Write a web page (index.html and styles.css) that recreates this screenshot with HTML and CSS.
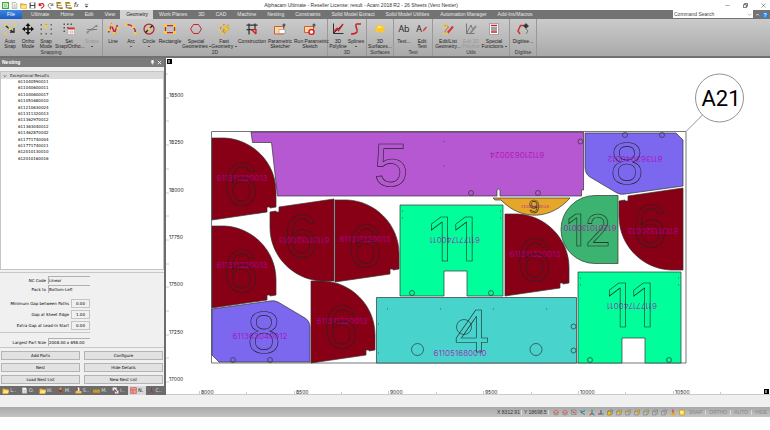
FILE: index.html
```
<!DOCTYPE html>
<html lang="en">
<head>
    <meta charset="UTF-8">
    <meta name="viewport" content="width=device-width, initial-scale=1.0">
    <title>Alphacam Ultimate</title>
    <link rel="stylesheet" href="styles.css">
</head>
<body>
    <!-- Shared icons -->
    <svg class="defs" width="0" height="0" aria-hidden="true">
        <symbol id="cube" viewBox="0 0 12 12"><path d="M1 4l3-3h7v7l-3 3H1zM1 4h7v7M8 4l3-3" fill="none" stroke="#777"/></symbol>
        <symbol id="cubeFront" viewBox="0 0 12 12"><path d="M1 4h7v7H1z" fill="#f4c20d"/><path d="M1 4l3-3h7v7l-3 3H1zM1 4h7v7M8 4l3-3" fill="none" stroke="#776633"/></symbol>
        <symbol id="cubeTop" viewBox="0 0 12 12"><path d="M1 4l3-3h7l-3 3z" fill="#f4c20d"/><path d="M1 4l3-3h7v7l-3 3H1zM1 4h7v7M8 4l3-3" fill="none" stroke="#777"/></symbol>
        <symbol id="cubeBack" viewBox="0 0 12 12"><path d="M4 1h7v7H4z" fill="#f4c20d"/><path d="M1 4l3-3h7v7l-3 3H1zM1 4h7v7M8 4l3-3" fill="none" stroke="#777"/></symbol>
        <symbol id="house" viewBox="0 0 12 12"><path d="M1 5l5-4 5 4-5 3z" fill="#e6a5a0" stroke="#cc2222"/><path d="M2 6v4l4 1 4-1V6" fill="none" stroke="#666"/></symbol>
        <symbol id="folder" viewBox="0 0 12 12"><path d="M1 3h4l1 1h5v7H1z" fill="#f5c842" stroke="#b58a1c"/><path d="M3 6h9l-2 5H1z" fill="#ffe28a"/></symbol>
        <symbol id="sheet" viewBox="0 0 12 12"><path d="M2 1h6l2 2v8H2z" fill="#fff" stroke="#888"/><path d="M4 5h4M4 7h4M4 9h4" stroke="#999"/></symbol>
        <symbol id="tree" viewBox="0 0 12 12"><path d="M2 3v7h5M2 6h4" fill="none" stroke="#555" stroke-width="1.5"/><path d="M0 0h9v3H0zM4 5h6v2H4zM5 9h7v3H5z" fill="#d9a520"/><path d="M2 1h5v1H2zM7 10h4v1H7z" fill="#553"/></symbol>
    </svg>

    <div class="app">
        <header class="titlebar">
            <div class="quick">
                <svg viewBox="0 0 12 12"><path d="M1 1h10v10H1z" fill="#fff" stroke="#3cab35" stroke-width="2"/><path d="M8 4H4v4h4V6H6" fill="none" stroke="#3cab35"/></svg>
                <svg><use href="#sheet"/></svg>
                <svg><use href="#folder"/></svg>
                <svg viewBox="0 0 12 12"><path d="M1 1h10v10H1z" fill="#444"/><path d="M3 1h6v4H3zM3 7h6v4H3z" fill="#fff"/></svg>
                <svg viewBox="0 0 12 12"><path d="M2 2v4h4M2 6c2-5 9-4 8 1-1 2-2 3-5 4" fill="none" stroke="#d2232a" stroke-width="2"/></svg>
                <svg viewBox="0 0 12 12"><path d="M10 2v4H6M10 6C8 1 1 2 2 7c1 2 2 3 5 4" fill="none" stroke="#777" stroke-width="1.5"/></svg>
                <svg><use href="#tree"/></svg>
                <svg><use href="#tree"/></svg>
                <span class="fx">f<small>x</small></span>
                <svg viewBox="0 0 12 12"><path d="M3 4h6M4 7h4l-2 2z" fill="#333" stroke="#333"/></svg>
            </div>
            <h1>Alphacam Ultimate - Reseller License: result - Acam 2018 R2 - 26 Sheets (Vero Nester)</h1>
            <div class="window-buttons">
                <button aria-label="Minimise"><svg viewBox="0 0 12 12"><path d="M1 6h10" stroke="#333"/></svg></button>
                <button aria-label="Restore"><svg viewBox="0 0 12 12"><path d="M1 4h7v7H1zM4 4V1h7v7H8" fill="none" stroke="#222" stroke-width="1.5"/></svg></button>
                <button aria-label="Close"><svg viewBox="0 0 12 12"><path d="M1 1l10 10M11 1L1 11" stroke="#222"/></svg></button>
            </div>
        </header>

        <nav class="tabs">
            <a class="file" href="#">File</a>
            <a href="#">Ultimate</a>
            <a href="#">Home</a>
            <a href="#">Edit</a>
            <a href="#">View</a>
            <a class="active" href="#">Geometry</a>
            <a href="#">Work Planes</a>
            <a href="#">3D</a>
            <a href="#">CAD</a>
            <a href="#">Machine</a>
            <a href="#">Nesting</a>
            <a href="#">Constraints</a>
            <a href="#">Solid Model Extract</a>
            <a href="#">Solid Model Utilities</a>
            <a href="#">Automation Manager</a>
            <a href="#">Add-Ins/Macros</a>
            <div class="search">
                <input type="text" placeholder="Command Search" aria-label="Command Search">
                <svg viewBox="0 0 12 12"><path d="M2 4l4 4 4-4" fill="none" stroke="#555"/></svg>
            </div>
            <button class="collapse" aria-label="Collapse ribbon"><svg viewBox="0 0 12 12"><path d="M3 8l3-3 3 3" fill="none" stroke="#fff" stroke-width="2"/></svg></button>
            <button class="help" aria-label="Help">?</button>
        </nav>

        <!-- Ribbon -->
        <div class="ribbon">
            <section class="group">
                <div class="tools">
                    <button class="tool"><svg viewBox="0 0 24 24"><path d="M3 5l16 14M12 18h8v-8" fill="none" stroke="#222" stroke-width="2.5"/><path d="M1 2h4v4H1zM9 9h5v5H9zM19 2h4v4h-4zM1 19h4v4H1z" fill="#f5cf3a"/></svg>Auto<br>Snap</button>
                    <button class="tool"><svg viewBox="0 0 24 24"><path d="M12 2v20M2 12h20" stroke="#111" stroke-width="3"/><path d="M12 0l5 6H7zM12 24l5-6H7zM0 12l6-5v10zM24 12l-6-5v10z" fill="#111"/></svg>Ortho<br>Mode</button>
                    <button class="tool"><svg viewBox="0 0 24 24"><path d="M1 2h3v3H1zM11 2h3v3h-3zM21 2h3v3h-3zM1 11h3v3H1zM21 11h3v3h-3zM1 20h3v3H1zM11 20h3v3h-3zM21 20h3v3h-3z" fill="#666"/><path d="M8 3h6v6H8z" fill="#f5cf3a"/></svg>Snap<br>Mode</button>
                    <button class="tool wide"><svg viewBox="0 0 24 24"><path d="M1 1h3v3H1zM8 1h3v3H8zM15 1h3v3h-3zM1 8h3v3H1zM8 8h3v3H8zM1 15h3v3H1z" fill="#555"/><path d="M10 9h13v14H10z" fill="#fff" stroke="#999"/><path d="M10 9h13v4H10z" fill="#c33"/><path d="M14 16h6v4h-6z" fill="none" stroke="#c66"/></svg>Set<br>Snap/Ortho...</button>
                    <button class="tool" disabled><svg viewBox="0 0 24 24"><path d="M2 19l18-13M2 13h20" fill="none" stroke="#777" stroke-width="2"/><path d="M1 17h4v4H1zM10 11h4v4h-4zM19 4h4v4h-4z" fill="#888"/></svg>Snaps<i></i></button>
                </div>
                <h2>Snapping</h2>
            </section>
            <section class="group">
                <div class="tools">
                    <button class="tool"><svg viewBox="0 0 24 24"><path d="M3 19L9 4l6 16 6-16" fill="none" stroke="#c8232c" stroke-width="3"/><path d="M1 11h5v5H1zM7 2h5v5H7zM12 18h5v5h-5zM19 8h5v5h-5z" fill="#f5cf3a"/></svg>Line</button>
                    <button class="tool"><svg viewBox="0 0 24 24"><path d="M3 3c11 0 18 7 18 18" fill="none" stroke="#c8232c" stroke-width="3"/><path d="M0 1h5v5H0zM14 5h5v5h-5zM18 18h5v5h-5z" fill="#f5cf3a"/></svg>Arc<i></i></button>
                    <button class="tool"><svg viewBox="0 0 24 24"><circle cx="12" cy="12" r="10" fill="none" stroke="#b8232c" stroke-width="2.5"/><path d="M5 19L19 5" stroke="#222" stroke-width="3"/><path d="M9 9h6v6H9z" fill="#f5cf3a"/></svg>Circle<i></i></button>
                    <button class="tool medium"><svg viewBox="0 0 24 24"><path d="M3 5h18v14H3z" fill="none" stroke="#c8232c" stroke-width="2.5"/><path d="M0 2h6v6H0zM18 2h6v6h-6zM0 16h6v6H0zM18 16h6v6h-6z" fill="#f5cf3a"/></svg>Rectangle</button>
                    <button class="tool wide"><svg viewBox="0 0 24 24"><path d="M7 3h10l6 9-6 9H7l-6-9z" fill="none" stroke="#c8232c" stroke-width="2"/></svg>Special<br>Geometries <b></b></button>
                    <button class="tool wide"><svg viewBox="0 0 24 24"><path d="M3 15l5-10 5-2M9 21l2-8" fill="none" stroke="#d66b1d" stroke-width="2"/><path d="M1 12h4v4H1zM6 3h4v4H6zM7 19h4v4H7z" fill="#f5cf3a"/><path d="M18 4l-8 9h5l-3 9 11-12h-6l5-6z" fill="#ffd21e" stroke="#c88a10"/></svg>Fast<br>Geometry <b></b></button>
                    <button class="tool wide"><svg viewBox="0 0 24 24"><path d="M1 4h22M6 1v22M1 13h14M18 1v12" fill="none" stroke="#333" stroke-width="2.5"/><path d="M11 13h9v9M20 22l-9-9" fill="none" stroke="#c22" stroke-width="2.5"/></svg>Construction</button>
                    <button class="tool wide"><svg viewBox="0 0 24 24"><path d="M1 7h18v15H1z" fill="#f8d9a0" stroke="#d05a3a" stroke-width="2"/><path d="M10 13h12v8H10z" fill="#fff" stroke="#777"/><path d="M17 4h6M20 1v8" stroke="#333" stroke-width="2"/></svg>Parametric<br>Sketcher</button>
                    <button class="tool extra"><svg viewBox="0 0 24 24"><path d="M1 7h18v12H1z" fill="#f8d9a0" stroke="#d05a3a" stroke-width="2"/><circle cx="15" cy="18" r="5" fill="#fff" stroke="#d22" stroke-width="3"/><path d="M17 4h6M20 1v8" stroke="#333" stroke-width="2"/></svg>Run Parametric<br>Sketch</button>
                </div>
                <h2>2D</h2>
            </section>
            <section class="group">
                <div class="tools">
                    <button class="tool"><svg viewBox="0 0 24 24"><path d="M3 1v20h20M3 21L20 4" fill="none" stroke="#333" stroke-width="2"/><path d="M4 17l6-6 3 4L22 2" fill="none" stroke="#c8232c" stroke-width="3"/></svg>3D<br>Polyline</button>
                    <button class="tool"><svg viewBox="0 0 24 24"><path d="M22 2H13c-5 4 4 11 1 16-3 4-8 4-12 4" fill="none" stroke="#c8232c" stroke-width="3"/></svg>Splines<i></i></button>
                </div>
                <h2>3D</h2>
            </section>
            <section class="group">
                <div class="tools">
                    <button class="tool medium"><svg viewBox="0 0 24 24"><path d="M1 15L9 2c6 5 10 3 14 5l-5 13C11 17 8 21 1 15z" fill="#fbc72b"/><path d="M6 11l4-6c4 3 6 2 9 3z" fill="#ffe98a"/></svg>3D<br>Surfaces...</button>
                </div>
                <h2>Surfaces</h2>
            </section>
            <section class="group">
                <div class="tools">
                    <button class="tool"><span class="glyph">Ab</span>Text...</button>
                    <button class="tool"><span class="glyph">A<svg viewBox="0 0 24 24"><path d="M4 20L18 4" stroke="#d33" stroke-width="5"/><path d="M1 23l2-6 4 3z" fill="#f5cf3a"/></svg></span>Edit<br>Text</button>
                </div>
                <h2>Text</h2>
            </section>
            <section class="group">
                <div class="tools">
                    <button class="tool wide"><svg viewBox="0 0 24 24"><path d="M3 8l5-5 5 5-5 6-4 7" fill="none" stroke="#d66b1d" stroke-width="2"/><path d="M1 6h4v4H1zM7 1h4v4H7zM2 19h4v4H2z" fill="#f5cf3a"/><path d="M11 20L22 7" stroke="#d33" stroke-width="4"/><path d="M8 23l2-5 3 3z" fill="#f5cf3a"/></svg>Edit/List<br>Geometry...</button>
                    <button class="tool" disabled><svg viewBox="0 0 24 24"><path d="M3 1v20h16M3 21L12 4l3 8" fill="none" stroke="#777" stroke-width="2"/><path d="M11 20L22 6" stroke="#888" stroke-width="4"/></svg>Edit 3D<br>Polyline</button>
                    <button class="tool wide"><svg viewBox="0 0 24 24"><path d="M3 1h18v22H3z" fill="#fff" stroke="#666"/><path d="M6 5h12M6 18h12" stroke="#c22" stroke-width="3"/><path d="M6 10h12M6 14h12" stroke="#444" stroke-width="2"/></svg>Special<br>Functions <b></b></button>
                </div>
                <h2>Utils</h2>
            </section>
            <section class="group">
                <div class="tools">
                    <button class="tool medium"><svg viewBox="0 0 24 24"><path d="M6 22l-4-6L7 5h9" fill="none" stroke="#d2332c" stroke-width="3"/><path d="M18 12l4 4-4 6" fill="none" stroke="#777" stroke-width="2"/><circle cx="18" cy="6" r="4" fill="#333"/><path d="M18 0v12M12 6h12" stroke="#333" stroke-width="1.5"/></svg>Digitise...</button>
                </div>
                <h2>Digitise</h2>
            </section>
        </div>

        <div class="workspace">
            <!-- Nesting panel -->
            <aside class="panel">
                <div class="panel-head">
                    <h2>Nesting</h2>
                    <svg viewBox="0 0 12 12"><path d="M4 1h4v5H4zM2 7h8M6 7v4" fill="#fff" stroke="#fff" stroke-width="1.5"/></svg>
                    <svg viewBox="0 0 12 12"><path d="M2 2l8 8M10 2l-8 8" stroke="#fff" stroke-width="2"/></svg>
                </div>
                <div class="results">
                    <div class="results-head"><svg viewBox="0 0 12 12"><path d="M2 4l4 4 4-4" fill="none" stroke="#333" stroke-width="2"/></svg>Exceptional Results</div>
                    <ul>
                        <li>611040590011</li>
                        <li>611040600011</li>
                        <li>611040600017</li>
                        <li>611051680010</li>
                        <li>611210630024</li>
                        <li>611311320013</li>
                        <li>611362970012</li>
                        <li>611363040012</li>
                        <li>611462870042</li>
                        <li>611771740004</li>
                        <li>611771740011</li>
                        <li>612010130010</li>
                        <li>612010160016</li>
                    </ul>
                </div>
                <form class="details">
                    <div class="rows">
                        <div class="row"><label for="nc">NC Code</label><input id="nc" type="text" value="Linear"></div>
                        <div class="row"><label for="pack">Pack to</label><input id="pack" type="text" value="Bottom-Left"></div>
                    </div>
                    <div class="rows gaps">
                        <div class="row"><label for="gap">Minimum Gap between Paths</label><input id="gap" class="short" type="text" value="0.00"></div>
                        <div class="row"><label for="edge">Gap at Sheet Edge</label><input id="edge" class="short" type="text" value="1.00"></div>
                        <div class="row"><label for="lead">Extra Gap at Lead-In Start</label><input id="lead" class="short" type="text" value="0.00"></div>
                    </div>
                    <div class="rows size">
                        <div class="row"><label for="size">Largest Part Size</label><input id="size" type="text" value="2008.00 x 658.00"></div>
                    </div>
                    <div class="actions">
                        <button type="button">Add Parts</button>
                        <button type="button">Configure</button>
                        <button type="button">Nest</button>
                        <button type="button">Hide Details</button>
                        <button type="button">Load Nest List</button>
                        <button type="button">New Nest List</button>
                    </div>
                </form>
                <nav class="panel-tabs">
                    <a href="#"><svg><use href="#folder"/></svg>L..</a>
                    <a href="#"><svg><use href="#sheet"/></svg>O.</a>
                    <a href="#"><svg><use href="#folder"/></svg>W.</a>
                    <a href="#"><svg viewBox="0 0 12 12"><path d="M6 1v9" stroke="#d9a520" stroke-width="3"/><path d="M3 5h6l-3 6z" fill="#a22"/></svg>M.</a>
                    <a href="#"><svg viewBox="0 0 12 12"><path d="M1 7h10v4H1z" fill="#f4c842"/><path d="M6 1v6" stroke="#fff" stroke-width="3"/><path d="M2 4h3" stroke="#d22" stroke-width="2"/></svg>S..</a>
                    <a href="#"><svg viewBox="0 0 12 12"><path d="M0 10V4l3 2V3l3 3V3l3 3V3l3 2v5z" fill="#c99a1c"/></svg>M.</a>
                    <a href="#"><svg viewBox="0 0 12 12"><path d="M1 1h7v5H1zM5 6h6v5H5z" fill="#eee"/><path d="M4 4l4 5" stroke="#c22" stroke-width="2"/></svg>I..</a>
                    <a class="active" href="#"><svg viewBox="0 0 12 12"><path d="M1 1h10v10H1z" fill="#e9a0a0" stroke="#c44"/><path d="M1 5h10M5 5v6" stroke="#c44"/></svg>N.</a>
                    <a href="#"><svg viewBox="0 0 12 12"><path d="M6 1v6l4 3M6 7l-4 3" fill="none" stroke="#933" stroke-width="1.5"/></svg>C..</a>
                </nav>
            </aside>

            <!-- Sheet drawing, one unit is one pixel at the normal window size -->
            <main class="stage">
                <svg viewBox="166 58 604 337" preserveAspectRatio="xMinYMin meet">
                    <defs>
                        <path id="wedge" class="maroon" d="M0 0H12C40 1 64 24 64 54V69L58 70V69H55V74L0 82Z"/>
                        <g id="flag">
                            <path class="blue" d="M585 133H676L683 140V186L625 194Q621 195 617 193L590 177Q585 174 585 167Z"/>
                            <circle cx="625" cy="135" r="2.5"/>
                            <circle cx="662" cy="135" r="2.5"/>
                        </g>
                        <g id="bracket">
                            <path class="green" d="M0 0H103V91H67V66H44V91H0Z"/>
                            <circle cx="12" cy="88" r="2.5"/>
                            <circle cx="91" cy="88" r="2.5"/>
                            <path d="M2 6h1M2 13h1M100 6h1M100 13h1"/>
                        </g>
                    </defs>

                    <!-- Rulers -->
                    <g class="ruler">
                        <path d="M166 74h2M166 98h3M166 121h3M166 145h3M166 169h3M166 193h3M166 216h3M166 240h3M166 264h3M166 287h3M166 311h3M166 335h3M166 358h3M166 382h3"/>
                        <path d="M199.500 391v3M246.500 392v2M294.500 391v3M341.500 392v2M388.500 391v3M436.500 392v2M483.500 391v3M531.500 392v2M578.500 391v3M625.500 392v2M673.500 391v3M720.500 392v2"/>
                        <path d="M166 394.500H770"/>
                        <text x="169" y="97">18500</text>
                        <text x="169" y="144">18250</text>
                        <text x="169" y="192">18000</text>
                        <text x="169" y="239">17750</text>
                        <text x="169" y="286">17500</text>
                        <text x="169" y="334">17250</text>
                        <text x="169" y="381">17000</text>
                        <text x="201" y="394">8000</text>
                        <text x="296" y="394">8500</text>
                        <text x="390" y="394">9000</text>
                        <text x="485" y="394">9500</text>
                        <text x="580" y="394">10000</text>
                        <text x="675" y="394">10500</text>
                    </g>
                    <path d="M167 59h5v5h-5zM764 389h5v5h-5z"/>
                    <path d="M169 60v3M766 390v3" stroke="#fff"/>

                    <path class="sheet" d="M211.500 131.500H686V363H211.500Z"/>

                    <!-- Parts -->
                    <g class="parts">
                        <g>
                            <path class="purple" d="M251 132H583.500V190H581.500V196H500V190Q498.500 188 497 190V196H277.500L271.500 142.500H252.500Z"/>
                            <circle cx="471" cy="193" r="2.500"/>
                            <circle cx="538" cy="193" r="2.500"/>
                            <circle cx="580.500" cy="141.500" r="2.500"/>
                            <path d="M443.500 141.500h1M443.500 166h1"/>
                        </g>
                        <use href="#flag"/>
                        <use href="#flag" transform="translate(895 495) rotate(180)"/>
                        <use href="#wedge" x="212" y="138"/>
                        <use href="#wedge" x="212" y="226"/>
                        <use href="#wedge" x="335" y="200"/>
                        <use href="#wedge" x="311" y="281"/>
                        <use href="#wedge" x="505" y="214"/>
                        <use href="#wedge" transform="translate(334 281) rotate(180)"/>
                        <use href="#wedge" transform="translate(683 270) rotate(180)"/>
                        <use href="#bracket" x="400" y="205"/>
                        <use href="#bracket" x="578" y="272"/>
                        <path class="orange" d="M493 198H570C552 219 522 222 501 200H495Z"/>
                        <path class="teal" d="M618 195.500H595A34 34 0 0 0 595 263.500H618Z"/>
                        <g>
                            <path class="cyan" d="M376.500 297.500H576.500V363H376.500Z"/>
                            <circle cx="417.500" cy="349.500" r="6"/>
                            <circle cx="536" cy="349.500" r="6"/>
                            <circle cx="464" cy="327" r="7.500"/>
                            <circle cx="573.500" cy="326.500" r="2.500"/>
                            <circle cx="573.500" cy="350.500" r="2.500"/>
                            <path d="M387 309h1M440 309h1M493 309h1M546 309h1M378 324h1M378 353h1"/>
                        </g>
                    </g>

                    <!-- Part codes, turned with the part -->
                    <g class="codes">
                        <text x="242" y="181">611311320013</text>
                        <text x="242" y="268">611311320013</text>
                        <text x="365" y="242">611311320013</text>
                        <text x="342" y="324">611311320013</text>
                        <text x="535" y="257">611311320013</text>
                        <text x="260" y="339">611363040012</text>
                        <text x="460" y="356">611051680010</text>
                        <text transform="translate(304 237) rotate(180)">611311320013</text>
                        <text transform="translate(653 228) rotate(180)">611311320013</text>
                        <text transform="translate(517 152) rotate(180)">611210630024</text>
                        <text transform="translate(635 156) rotate(180)">611363040012</text>
                        <text transform="translate(455 237) rotate(180)">611771740011</text>
                        <text transform="translate(632 303) rotate(180)">611771740011</text>
                        <text transform="translate(590 225) rotate(180)">612010130010</text>
                        <text class="tiny" transform="translate(535 205) rotate(180)">611462870042</text>
                    </g>

                    <!-- Part numbers -->
                    <g class="numbers">
                        <text x="391" y="186">5</text>
                        <text class="eight" x="627" y="184">8</text>
                        <text class="eight" x="264" y="353">8</text>
                        <text x="472" y="352">4</text>
                        <text x="241" y="205">6</text>
                        <text x="241" y="292">6</text>
                        <text x="365" y="267">6</text>
                        <text x="341" y="348">6</text>
                        <text x="534" y="281">6</text>
                        <text x="301" y="257">6</text>
                        <text x="650" y="247">6</text>
                        <text class="plain" x="453" y="261">11</text>
                        <text class="plain" x="631" y="327">11</text>
                        <text class="plain mid" x="589" y="246">12</text>
                        <text class="small" x="534" y="213">9</text>
                    </g>

                    <!-- Sheet tag -->
                    <circle class="tag" cx="719.500" cy="98" r="24"/>
                    <path class="tag" d="M686 131.500L702.500 115"/>
                    <text class="tag-text" x="721" y="106">A21</text>
                </svg>
            </main>
        </div>

        <footer class="statusbar">
            <span class="coord">X 8312.91</span>
            <span class="coord">Y 18698.5</span>
            <div class="views">
                <svg><use href="#house"/></svg>
                <svg><use href="#house"/></svg>
                <svg viewBox="0 0 12 12"><path d="M1 1h9v9H1z" fill="none" stroke="#777"/><path d="M1 1l9 9M3 6h5" stroke="#c33"/></svg>
                <svg viewBox="0 0 12 12"><path d="M2 1v5l8 4" fill="none" stroke="#2a9a44" stroke-width="2"/><path d="M2 6l8-4" stroke="#36c" stroke-width="2"/></svg>
                <svg viewBox="0 0 12 12"><path d="M6 0v8" stroke="#2a9a44" stroke-width="2"/><path d="M6 8l5 3" stroke="#25c" stroke-width="2"/><path d="M6 8l-5 3" stroke="#c22" stroke-width="2"/></svg>
                <svg viewBox="0 0 12 12"><path d="M6 1v8" stroke="#25c" stroke-width="2"/><path d="M6 9h6" stroke="#2a9a44" stroke-width="2"/><path d="M6 9H0" stroke="#c22" stroke-width="2"/></svg>
                <svg><use href="#cubeFront"/></svg>
                <svg><use href="#cubeBack"/></svg>
                <svg><use href="#cubeTop"/></svg>
                <svg><use href="#cubeBack"/></svg>
                <svg><use href="#cubeTop"/></svg>
                <svg><use href="#cube"/></svg>
                <svg><use href="#cube"/></svg>
                <svg viewBox="0 0 12 12"><path d="M6 0v8" stroke="#c22" stroke-width="2"/><path d="M0 10l6-4 6 4-6 2z" fill="#f0a818"/></svg>
                <svg viewBox="0 0 12 12"><path d="M1 1h10v10H1z" fill="#ffd83a" stroke="#b58a1c"/><path d="M3 3h5v5H3z" fill="#fff3a8"/></svg>
            </div>
            <button>SNAP</button>
            <button>ORTHO</button>
            <button>AUTO</button>
            <button>HIDE</button>
        </footer>
    </div>
</body>
</html>
```
FILE: styles.css
```
* {
    box-sizing: border-box;
}

body {
    margin: 0;
    background: #fff;
    color: #222;
    font-family: "Liberation Sans", Arial, sans-serif;
    font-size: 5px;
    line-height: 5px;
}

.defs {
    position: absolute;
}

h1, h2 {
    margin: 0;
    font-size: 5px;
    font-weight: normal;
}

ul {
    margin: 0;
    padding: 0;
    list-style: none;
}

a {
    color: inherit;
    text-decoration: none;
}

button, input {
    margin: 0;
    padding: 0;
    border: none;
    background: none;
    color: inherit;
    font: inherit;
}

.app {
    display: flex;
    flex-direction: column;
    min-height: 100vh;
    padding-bottom: 13px;
}

/* Title bar */
.titlebar {
    display: grid;
    grid-template-columns: 1fr auto 1fr;
    align-items: center;
    height: 10px;
}

.titlebar h1 {
    margin-right: 48px;
    color: #333;
}

.quick {
    display: flex;
    align-items: center;
    gap: 2px;
    padding-left: 2px;
}

.quick svg {
    width: 7px;
    height: 7px;
}

.fx {
    width: 7px;
    font-size: 7px;
    font-style: italic;
}

.fx small {
    font-size: 5px;
}

.window-buttons {
    display: flex;
    justify-content: flex-end;
    gap: 13px;
    padding-right: 4px;
}

.window-buttons svg {
    display: block;
    width: 5px;
    height: 5px;
}

/* Ribbon tabs */
.tabs {
    display: flex;
    align-items: stretch;
    height: 9px;
    background: #737373;
    color: #e8e8e8;
    line-height: 9px;
    white-space: nowrap;
}

.tabs a {
    padding: 0 5px 0 6px;
}

.tabs .file {
    margin-right: 3px;
    padding: 0 7px;
    background: linear-gradient(#3c86e0, #1c5cc0);
    color: #fff;
}

.tabs .active {
    background: #d2d2d2;
    color: #222;
}

.search {
    display: flex;
    align-items: center;
    width: 80px;
    height: 8px;
    margin-left: auto;
    background: #fff;
}

.search input {
    flex: 1;
    min-width: 0;
    padding-left: 1px;
    line-height: 8px;
    outline: none;
}

.search input::placeholder {
    color: #444;
    opacity: 1;
}

.search svg {
    width: 5px;
    height: 5px;
    margin-right: 1px;
}

.collapse {
    width: 9px;
}

.collapse svg {
    display: block;
    width: 5px;
    height: 5px;
    margin: auto;
}

.help {
    align-self: center;
    width: 6px;
    height: 6px;
    margin-right: 2px;
    border-radius: 3px;
    background: #2a86e0;
    color: #fff;
    font-weight: bold;
    line-height: 6px;
}

/* Ribbon */
.ribbon {
    display: flex;
    height: 39px;
    background: linear-gradient(#cbcbcb, #a9a9a9);
    border-bottom: 2px solid #707070;
}

.group {
    display: flex;
    flex-direction: column;
    padding: 4px 1px 1px;
    border-right: 1px solid #999;
}

.group h2 {
    color: #333;
    text-align: center;
}

.tools {
    display: flex;
    flex: 1;
    align-items: flex-start;
}

.tool {
    width: 18px;
    line-height: 5px;
    text-align: center;
    white-space: nowrap;
}

.tool > svg {
    display: block;
    width: 12px;
    height: 12px;
    margin: 0 auto 4px;
}

.tool.medium {
    width: 24px;
}

.tool.wide {
    width: 28px;
}

.tool.extra {
    width: 32px;
}

.tool:disabled {
    color: #999;
}

.tool i {
    display: block;
    width: 2px;
    height: 1px;
    margin: 2px auto;
    background: #555;
}

.tool b {
    display: inline-block;
    width: 2px;
    height: 1px;
    margin-bottom: 1px;
    background: #555;
}

.glyph {
    display: flex;
    justify-content: center;
    height: 12px;
    margin-bottom: 4px;
    font-family: "Open Sans", sans-serif;
    font-size: 9px;
    line-height: 12px;
}

.glyph svg {
    width: 6px;
    height: 12px;
}

/* Workspace */
.workspace {
    display: flex;
    flex: 1;
    background: #fff;
}

.panel {
    display: flex;
    flex-direction: column;
    flex: none;
    width: 166px;
    border-right: 2px solid #6c6c6c;
    background: #f0f0f0;
    font-family: "DejaVu Sans", sans-serif;
    font-size: 4px;
}

.panel-head {
    display: flex;
    align-items: center;
    gap: 2px;
    height: 9px;
    margin-bottom: 4px;
    padding: 0 2px;
    background: #7b7b7b;
    color: #fff;
}

.panel-head h2 {
    flex: 1;
    font-family: "Liberation Sans", Arial, sans-serif;
    font-weight: bold;
}

.panel-head svg {
    width: 5px;
    height: 5px;
}

.results {
    flex: 1;
    border: 1px solid #c4c4c8;
    background: #fff;
}

.results-head {
    display: flex;
    align-items: center;
    gap: 3px;
    height: 7px;
    padding-left: 2px;
    background: #dadada;
}

.results-head svg {
    width: 4px;
    height: 4px;
}

.results ul {
    display: flex;
    flex-direction: column;
    justify-content: space-between;
    height: 83px;
    padding-left: 17px;
    color: #000;
    line-height: 6px;
}

.details {
    margin-top: 2px;
    border-top: 1px solid #c8c8c8;
    color: #000;
}

.rows {
    display: flex;
    flex-direction: column;
    gap: 1px;
    width: 90px;
    padding-top: 3px;
}

.rows.gaps {
    gap: 2px;
    padding: 6px 0 2px;
    border-bottom: 1px solid #c8c8c8;
}

.rows.size {
    padding: 5px 0 1px;
}

.row {
    display: flex;
    align-items: center;
    justify-content: flex-end;
    gap: 2px;
    white-space: nowrap;
}

.row input {
    width: 42px;
    height: 8px;
    border-top: 1px solid #b0b0b0;
    border-left: 1px solid #b0b0b0;
}

.row .short {
    width: 19px;
    height: 9px;
    border: 1px solid #c4c4c4;
    text-align: center;
}

.actions {
    display: grid;
    grid-template-columns: 1fr 1fr;
    gap: 3px 4px;
    padding: 3px 1px 2px;
    border-top: 1px solid #c8c8c8;
}

.actions button {
    height: 9px;
    border: 1px solid #b4b4b4;
    background: #e2e2e2;
}

.panel-tabs {
    display: flex;
    height: 9px;
    background: #6c6c6c;
    color: #ddd;
    font-size: 5px;
}

.panel-tabs a {
    display: flex;
    flex: 1;
    align-items: center;
    justify-content: center;
    gap: 1px;
}

.panel-tabs svg {
    width: 7px;
    height: 7px;
}

.panel-tabs .active {
    background: #d8d8d8;
    color: #222;
}

/* Drawing */
.stage {
    flex: 1;
    min-width: 0;
}

.stage > svg {
    display: block;
    width: 100%;
}

.ruler path {
    stroke: #ccc;
}

.ruler text {
    fill: #222;
    font-family: Inter, sans-serif;
    font-size: 5px;
}

.sheet {
    fill: none;
    stroke: #777;
}

.parts {
    fill: none;
    stroke: #333;
    stroke-width: 0.7;
}

.maroon { fill: #880015; }
.purple { fill: #b658d2; }
.blue { fill: #7b68ee; }
.green { fill: #00fe9b; }
.orange { fill: #e6a62a; }
.teal { fill: #3cb371; }
.cyan { fill: #48d4cc; }

.codes {
    fill: #b400b4;
    fill-opacity: 0.75;
    font-family: Inter, sans-serif;
    font-size: 8px;
    text-anchor: middle;
}

.codes .tiny {
    font-size: 4px;
}

.numbers {
    fill: none;
    stroke: #222;
    stroke-width: 0.6;
    font-size: 62px;
    text-anchor: middle;
}

.numbers .eight {
    font-size: 60px;
}

.numbers .plain {
    font-family: Inter, sans-serif;
    font-size: 60px;
}

.numbers .mid {
    font-size: 44px;
}

.numbers .small {
    font-size: 19px;
}

.tag {
    fill: none;
    stroke: #777;
    stroke-width: 0.8;
}

.tag-text {
    font-family: Roboto, sans-serif;
    font-size: 22px;
    text-anchor: middle;
}

/* Status bar */
.statusbar {
    display: flex;
    align-items: center;
    justify-content: flex-end;
    height: 22px;
    padding-top: 12px;
    background: linear-gradient(#f0f0f0 12px, #a8a8a8 12px, #c4c4c4);
    color: #333;
    font-family: "Liberation Sans Narrow", "Liberation Sans", sans-serif;
    white-space: nowrap;
}

.statusbar .coord {
    padding: 0 1px 0 2px;
    border-right: 1px solid #ddd;
}

.views {
    display: flex;
    gap: 3px;
    padding: 0 1px 0 4px;
}

.views svg {
    width: 6px;
    height: 7px;
}

.statusbar button {
    padding: 0 3px;
    border-right: 1px solid #d8d8d8;
    color: #888;
}

.statusbar button:last-child {
    border-right: none;
}
```
